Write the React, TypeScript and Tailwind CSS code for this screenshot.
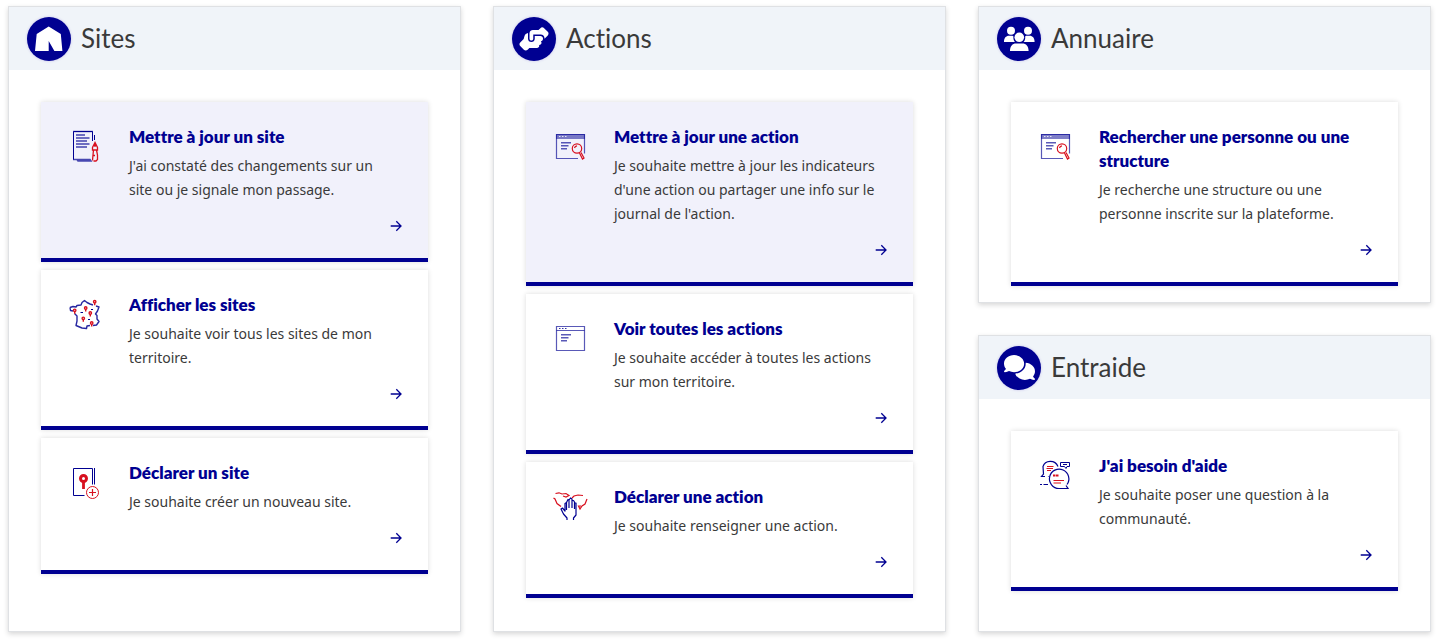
import type { ReactNode } from "react";
import { FaComments, FaHandshakeAngle } from "react-icons/fa6";

const BLUE = "#000091";
const RED = "#d8101f";

function Drawing({ children }: { children: ReactNode }) {
  return (
    <svg viewBox="0 0 40 40" className="size-10 shrink-0" fill="none" aria-hidden="true">
      {children}
    </svg>
  );
}

function DocumentDrawing() {
  return (
    <Drawing>
      <path d="M8.5 33.5V5.5H27.5V15" stroke={BLUE} />
      <path d="M8 33.500H12L13 35H26L25 33.500H12" stroke={BLUE} strokeWidth="1.600" opacity="0.700" />
      <path d="M8 5.500H28" stroke={BLUE} strokeWidth="1.600" opacity="0.500" />
      <path d="M11 9H20M11 12H24.500M11 15H22M11 18H24.500M11 21H22" stroke={BLUE} strokeWidth="2" opacity="0.550" />
      <path d="M29.500 9V14" stroke={BLUE} />
      <path d="M30 16.500L27.500 21.500V24H32.500V21.500ZM28.500 24L28 29L27.500 34.500M31.500 24L32.500 29V33.500L31 35H28.500M30 17V21M28.200 29.500H30" stroke={RED} strokeWidth="1.300" />
    </Drawing>
  );
}

const pins = [
  [29.7, 8.7],
  [9.7, 17.3],
  [20.7, 15],
  [25.3, 20],
  [18.3, 25.3],
  [26.7, 30],
];

function MapDrawing() {
  return (
    <Drawing>
      <path
        d="M5 13.500L8 12.500L11 13L12 11.500L16 11L17 8.500L19.500 6.500L22 8.500L25 10L28 11M31 12L34 13L32.500 17L30.500 20L32 21.500L32 25L34 27.500L31.500 31L28 31.500M25 31.500L22 32L21.500 34.500L17 34L11 31.500L12 27L12 22L9.500 19.500M8 17L5.500 16.500L5 13.500"
        stroke={BLUE}
        strokeWidth="1.400"
        strokeLinejoin="round"
        opacity="0.850"
      />
      <path d="M15.500 18.500H18M26 15.500H28M23 25.500H25" stroke={BLUE} />
      {pins.map(([x, y]) => (
        <g key={`${x}-${y}`} stroke={RED} strokeWidth="1.400">
          <circle cx={x} cy={y - 1} r="1.200" />
          <path d={`M${x} ${y}V${y + 2.5}`} />
        </g>
      ))}
    </Drawing>
  );
}

function PinDrawing() {
  return (
    <Drawing>
      <path d="M19.500 33.500H8.500V6.500H27.500V22.500M29.500 6V22.500" stroke={BLUE} />
      <circle cx="18.500" cy="16.500" r="3" stroke={RED} strokeWidth="3" />
      <path d="M18.500 19V27" stroke={RED} strokeWidth="2.800" />
      <circle cx="27.500" cy="30.500" r="6" stroke={RED} />
      <path d="M24 30.500H31M27.500 27V34" stroke={RED} strokeWidth="1.200" />
    </Drawing>
  );
}

function WindowDrawing({ search = false }: { search?: boolean }) {
  return (
    <Drawing>
      {search && <path d="M6 8H35V13H6Z" fill={BLUE} opacity="0.500" />}
      <path d={search ? "M28 32.500H6.500V8.500H34.500V27.500" : "M34.500 8.500H6.500V32.500H34.500Z"} stroke={BLUE} strokeWidth="1.200" opacity="0.650" />
      {!search && <path d="M6.500 12.500H34.500" stroke={BLUE} opacity="0.650" />}
      <path d="M9 10.500H10.500M12 10.500H13.500M15 10.500H16.500" stroke={search ? "#ffffff" : BLUE} opacity="0.800" />
      <path d="M11 16.700H21M11 19.700H18.500M11 22.700H17" stroke={BLUE} strokeWidth="1.500" opacity="0.650" />
      {search && (
        <g stroke={RED} strokeWidth="1.200">
          <circle cx="27" cy="22.500" r="4.700" />
          <path d="M24.500 22A3 3 0 0 1 27 19.800M29.500 27L32.500 33L34 32L31 26.500" />
        </g>
      )}
    </Drawing>
  );
}

function HandDrawing() {
  return (
    <Drawing>
      <path
        d="M17 34V32L13.500 28L11 23L12.500 22L15 25V17.500L16.500 16.500V24M16.500 16.500L18 13.500L19 14V22M19 14L20.500 12L22 13V22M22 14.500H23.500L24.500 16V23M24.500 17H26V29L23.500 32V34"
        stroke={BLUE}
        strokeWidth="1.200"
        strokeLinejoin="round"
      />
      <path
        d="M5.500 7.500L9 6.800L12 8L16 7.500L19 9.500L16 11L13 10M3.500 12L5 13L7 17.500L11 20.500M22 12L24 10L28 9L33 9.500M37 13L35 18L32 20L30 23L28.500 20L31 20"
        stroke={RED}
        strokeWidth="1.200"
      />
    </Drawing>
  );
}

function ChatDrawing() {
  return (
    <Drawing>
      <path d="M10 21.500H6.500L8.500 19L8 11.500C10 5 20 4.500 23 11.500M13.500 22V21.500M5 29.500H7M8.500 29.500H13" stroke={BLUE} strokeWidth="1.200" />
      <path d="M32 29.500A9.700 9.700 0 1 0 24 33.500H33L31 30.500" stroke={BLUE} strokeWidth="1.200" />
      <path d="M25.500 7.500H34.500V11.500H32L31 13.500L29.500 11.500H25.500ZM28 9.500H32" stroke={BLUE} />
      <path d="M12 11.500H18.500M11.500 13.500H18M12 15.500H16M18.500 25.500H29M18.500 28H26" stroke={RED} strokeWidth="1.200" />
      <path d="M19 21.500V20.500H20.500M22 21.500V20.500H23.500" stroke={RED} strokeWidth="2" />
    </Drawing>
  );
}

function TentIcon() {
  return (
    <svg viewBox="0 0 44 44" className="size-11" fill="currentColor" aria-hidden="true">
      <path d="M21.700 9.500L33.800 17L35.400 34H27.400L21.700 24V34H8L9.700 17Z" />
    </svg>
  );
}

function PeopleIcon() {
  return (
    <svg viewBox="0 0 44 44" className="size-11" fill="currentColor" aria-hidden="true">
      <circle cx="14" cy="13.700" r="4" />
      <circle cx="31" cy="13.700" r="4" />
      <circle cx="22.300" cy="20.300" r="4.800" />
      <path d="M7 25C7 21 9 18.800 12 18.800H15.500L16.500 19.500C16 22 17 24 18 25ZM37.600 25C37.600 21 35.600 18.800 32.600 18.800H29.100L28.100 19.500C28.600 22 27.600 24 26.600 25ZM13 34C13 29 15.500 26.500 19 26.500H25.500C29 26.500 31.600 29 31.600 34Z" />
    </svg>
  );
}

function ArrowDrawing() {
  return (
    <svg viewBox="0 0 16 16" className="ml-auto mt-4 size-4" fill="none" stroke={BLUE} strokeWidth="1.300" aria-hidden="true">
      <path d="M2.700 8H13M8.300 3.300L13 8L8.300 12.700" />
    </svg>
  );
}

type TileProps = { title: string; text: string; drawing: ReactNode; active?: boolean };

function Tile({ title, text, drawing, active = false }: TileProps) {
  return (
    <a
      href="#"
      className={`flex gap-6 border-b-4 border-[#000091] py-6 pl-6 shadow-[0_0_5px_rgba(0,0,0,0.14)] ${active ? "bg-[#f1f1fb]" : "bg-white"}`}
    >
      {drawing}
      <div className="-mt-px flex min-w-0 flex-1 flex-col pr-6">
        <h3 className="text-[17px] leading-6 font-extrabold text-[#000091]">{title}</h3>
        <p className="mt-[5px] pr-2 font-['Noto_Sans',sans-serif] text-sm leading-6 text-[#3a3a3a]">{text}</p>
        <ArrowDrawing />
      </div>
    </a>
  );
}

type PanelProps = { title: string; icon: ReactNode; children: ReactNode; compact?: boolean };

function Panel({ title, icon, children, compact = false }: PanelProps) {
  return (
    <section className="flex-1 border border-[#dfe1e4] bg-white shadow-[0_2px_5px_rgba(0,0,0,0.16)]">
      <header className="flex h-[63px] items-center gap-[10px] bg-[#f0f4f9] px-[18px]">
        <span className="flex size-11 items-center justify-center rounded-full bg-[#000091] text-white shadow-[0_0_2px_1px_#dcdcf2]">
          {icon}
        </span>
        <h2 className="pb-[2px] text-[26px] leading-8 text-[#3a3a3a]">{title}</h2>
      </header>
      <div className={`flex flex-col gap-2 px-8 pt-8 ${compact ? "pb-4" : "pb-[33px]"}`}>{children}</div>
    </section>
  );
}

export default function App() {
  return (
    <main className="grid grid-cols-3 gap-8 bg-white pt-[6px] pr-[13px] pb-2 pl-2 font-['Lato','Noto_Sans',sans-serif] [font-variant-ligatures:none]">
      <div className="flex flex-col">
        <Panel title="Sites" icon={<TentIcon />}>
          <Tile active title="Mettre à jour un site" text="J'ai constaté des changements sur un site ou je signale mon passage." drawing={<DocumentDrawing />} />
          <Tile title="Afficher les sites" text="Je souhaite voir tous les sites de mon territoire." drawing={<MapDrawing />} />
          <Tile title="Déclarer un site" text="Je souhaite créer un nouveau site." drawing={<PinDrawing />} />
        </Panel>
      </div>
      <div className="flex flex-col">
        <Panel title="Actions" icon={<FaHandshakeAngle className="size-[30px]" aria-hidden="true" />}>
          <Tile
            active
            title="Mettre à jour une action"
            text="Je souhaite mettre à jour les indicateurs d'une action ou partager une info sur le journal de l'action."
            drawing={<WindowDrawing search />}
          />
          <Tile title="Voir toutes les actions" text="Je souhaite accéder à toutes les actions sur mon territoire." drawing={<WindowDrawing />} />
          <Tile title="Déclarer une action" text="Je souhaite renseigner une action." drawing={<HandDrawing />} />
        </Panel>
      </div>
      <div className="flex flex-col gap-8">
        <Panel compact title="Annuaire" icon={<PeopleIcon />}>
          <Tile
            title="Rechercher une personne ou une structure"
            text="Je recherche une structure ou une personne inscrite sur la plateforme."
            drawing={<WindowDrawing search />}
          />
        </Panel>
        <Panel compact title="Entraide" icon={<FaComments className="size-[31px]" aria-hidden="true" />}>
          <Tile title="J'ai besoin d'aide" text="Je souhaite poser une question à la communauté." drawing={<ChatDrawing />} />
        </Panel>
      </div>
    </main>
  );
}
